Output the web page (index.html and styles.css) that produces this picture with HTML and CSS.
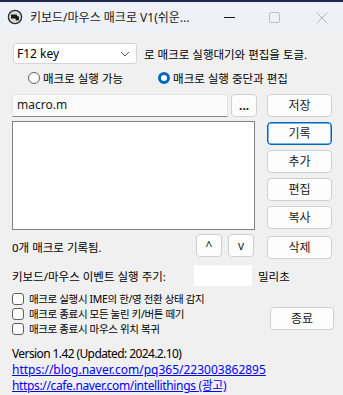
FILE: index.html
```html
<!DOCTYPE html>
<html>
    <head>
        <meta charset="utf-8">
        <title>키보드/마우스 매크로</title>
        <link rel="stylesheet" href="styles.css">
    </head>
    <body>
        <div class="window">
            <div class="titlebar">
                <svg class="app-icon" width="16" height="16" viewBox="0 0 16 16">
                    <circle cx="8" cy="8" r="6.6" fill="#d8d8d8" stroke="#2a2a2a" stroke-width="1.3"/>
                    <rect x="4" y="5.5" width="6" height="4" rx="0.6" fill="#1a1a1a"/>
                    <rect x="8.5" y="7" width="3.5" height="4.5" rx="1.6" fill="#1a1a1a"/>
                </svg>
                <span class="title">키보드/마우스 매크로 V1(쉬운...</span>
                <div class="controls">
                    <svg width="46" height="30" viewBox="0 0 46 30"><line x1="18" y1="15.5" x2="29" y2="15.5" stroke="#1a1a1a" stroke-width="1"/></svg>
                    <svg width="46" height="30" viewBox="0 0 46 30"><rect x="17.5" y="10.5" width="10" height="10" rx="1.5" fill="none" stroke="#c2c2c2" stroke-width="1"/></svg>
                    <svg width="46" height="30" viewBox="0 0 46 30"><path d="M18.5 10.5 L29.5 21.5 M29.5 10.5 L18.5 21.5" stroke="#b8b8b8" stroke-width="1"/></svg>
                </div>
            </div>

            <div class="content">
                <div class="row toggle-row">
                    <div class="combo">
                        <span>F12 key</span>
                        <svg width="10" height="6" viewBox="0 0 10 6"><path d="M1 1 L5 5 L9 1" fill="none" stroke="#555" stroke-width="1"/></svg>
                    </div>
                    <span class="label">로 매크로 실행대기와 편집을 토글.</span>
                </div>

                <div class="row radio-row">
                    <label class="radio"><span class="dot"></span>매크로 실행 가능</label>
                    <label class="radio checked"><span class="dot"></span>매크로 실행 중단과 편집</label>
                </div>

                <div class="main">
                    <div class="left">
                        <div class="file-row">
                            <div class="file-input">macro.m</div>
                            <button class="btn small">...</button>
                        </div>
                        <div class="listbox"></div>
                        <div class="status-row">
                            <span class="status">0개 매크로 기록됨.</span>
                            <button class="btn small arrow">^</button>
                            <button class="btn small arrow">v</button>
                        </div>
                    </div>
                    <div class="right">
                        <button class="btn">저장</button>
                        <div class="button-stack">
                            <button class="btn default">기록</button>
                            <button class="btn">추가</button>
                            <button class="btn">편집</button>
                            <button class="btn">복사</button>
                        </div>
                        <button class="btn delete">삭제</button>
                    </div>
                </div>

                <div class="row delay-row">
                    <span class="delay-label">키보드/마우스 이벤트 실행 주기:</span>
                    <div class="delay-input"></div>
                    <span class="unit">밀리초</span>
                </div>

                <div class="options">
                    <div class="checks">
                        <label class="check"><span class="box"></span>매크로 실행시 IME의 한/영 전환 상태 감지</label>
                        <label class="check"><span class="box"></span>매크로 종료시 모든 눌린 키/버튼 떼기</label>
                        <label class="check"><span class="box"></span>매크로 종료시 마우스 위치 복귀</label>
                    </div>
                    <button class="btn quit">종료</button>
                </div>

                <div class="about">
                    <div class="version">Version 1.42 (Updated: 2024.2.10)</div>
                    <a href="#">https://blog.naver.com/pq365/223003862895</a>
                    <a href="#" class="cafe">https://cafe.naver.com/intellithings (광고)</a>
                </div>
            </div>
        </div>
    </body>
</html>
```

FILE: styles.css
```css
body{
    margin: 0;
    background: #f0f0f0;
    font-family: "Noto Sans", "Noto Sans CJK KR", sans-serif;
    font-size: 12px;
    color: #000000;
}

.window{
    width: 343px;
    height: 395px;
    overflow: hidden;
    border-top: 2px solid #1d2c4a;
    box-sizing: border-box;
}

.titlebar{
    height: 29px;
    background: #eef2f8;
    display: flex;
    align-items: center;
}

.app-icon{
    margin-left: 7px;
    margin-top: 1px;
}

.title{
    margin-left: 7px;
    font-size: 12px;
    color: #1a1a1a;
    white-space: nowrap;
}

.controls{
    margin-left: auto;
    display: flex;
    margin-right: -1px;
}

.content{
    padding: 12px 0 0 12px;
}

.row{
    display: flex;
    align-items: center;
}

.combo{
    height: 19px;
    background: #ffffff;
    border: 1px solid #d5d5d5;
    border-radius: 3px;
    margin-left: 1px;
    display: flex;
    align-items: center;
    justify-content: space-between;
    padding: 0 6px 0 3px;
    box-sizing: content-box;
    width: 113px;
}

.label{
    margin-left: 7px;
    font-size: 11.5px;
}

.radio-row{
    margin-top: 7px;
    height: 14px;
    font-size: 11.5px;
}

.radio{
    display: flex;
    align-items: center;
}

.radio:first-child{
    margin-left: 16px;
}

.radio + .radio{
    margin-left: 35px;
}

.dot{
    width: 10px;
    height: 10px;
    border: 1px solid #5f5f5f;
    border-radius: 50%;
    background: #ffffff;
    margin-right: 3px;
}

.radio.checked .dot{
    width: 6px;
    height: 6px;
    border: 3px solid #0067c0;
    background: #ffffff;
}

.main{
    display: flex;
    margin-top: 9px;
}

.left{
    width: 245px;
}

.file-row{
    display: flex;
    height: 23px;
}

.file-input{
    width: 212px;
    background: #fbfbfb;
    border: 1px solid #e2e2e2;
    border-bottom-color: #858585;
    border-radius: 3px 3px 0 0;
    padding: 2px 0 0 4px;
    line-height: 15px;
    font-size: 12px;
    color: #1a1a1a;
}

.btn{
    font-family: "Noto Sans", "Noto Sans CJK KR", sans-serif;
    font-size: 12px;
    color: #1a1a1a;
    background: #fdfdfd;
    border: 1px solid #d0d0d0;
    border-radius: 4px;
    height: 23px;
    width: 65px;
    padding: 0;
    line-height: 20px;
}

.btn.small{
    width: 26px;
    height: 23px;
}

.file-row .btn.small{
    margin-left: 3px;
    line-height: 18px;
    font-weight: bold;
}

.listbox{
    margin-top: 4px;
    width: 241px;
    height: 107px;
    background: #ffffff;
    border: 1px solid #838383;
}

.status-row{
    display: flex;
    align-items: center;
    margin-top: 4px;
}

.status{
    width: 184px;
    margin-top: 3px;
    font-size: 11.5px;
}

.arrow{
    line-height: 18px;
}

.arrow + .arrow{
    margin-left: 6px;
}

.right{
    margin-left: 10px;
    display: flex;
    flex-direction: column;
}

.button-stack{
    margin-top: 5px;
    display: flex;
    flex-direction: column;
    gap: 5px;
}

.btn.default{
    border-color: #0067c0;
    box-shadow: inset 0 0 0 0.5px #0067c0;
}

.btn.delete{
    margin-top: 7px;
}

.delay-row{
    margin-top: 6px;
    height: 21px;
    font-size: 11.5px;
}

.delay-label{
    width: 182px;
}

.delay-input{
    width: 58px;
    height: 21px;
    background: #ffffff;
    margin-right: 6px;
}

.options{
    display: flex;
    margin-top: 7px;
}

.checks{
    display: flex;
    flex-direction: column;
    gap: 3px;
    width: 258px;
    font-size: 10.5px;
    letter-spacing: -0.35px;
}

.check{
    display: flex;
    align-items: center;
    height: 12px;
    line-height: 12px;
}

.box{
    width: 10px;
    height: 10px;
    border: 1px solid #5f5f5f;
    border-radius: 3px;
    background: #ffffff;
    margin-right: 5px;
}

.btn.quit{
    margin-top: 14px;
    width: 64px;
}

.about{
    margin-top: 11px;
    display: flex;
    flex-direction: column;
    line-height: 16px;
    font-size: 12px;
}

.version{
    letter-spacing: -0.6px;
}

.about a{
    color: #0000ff;
    text-decoration: underline;
}

.about a.cafe{
    letter-spacing: -0.35px;
}
```
